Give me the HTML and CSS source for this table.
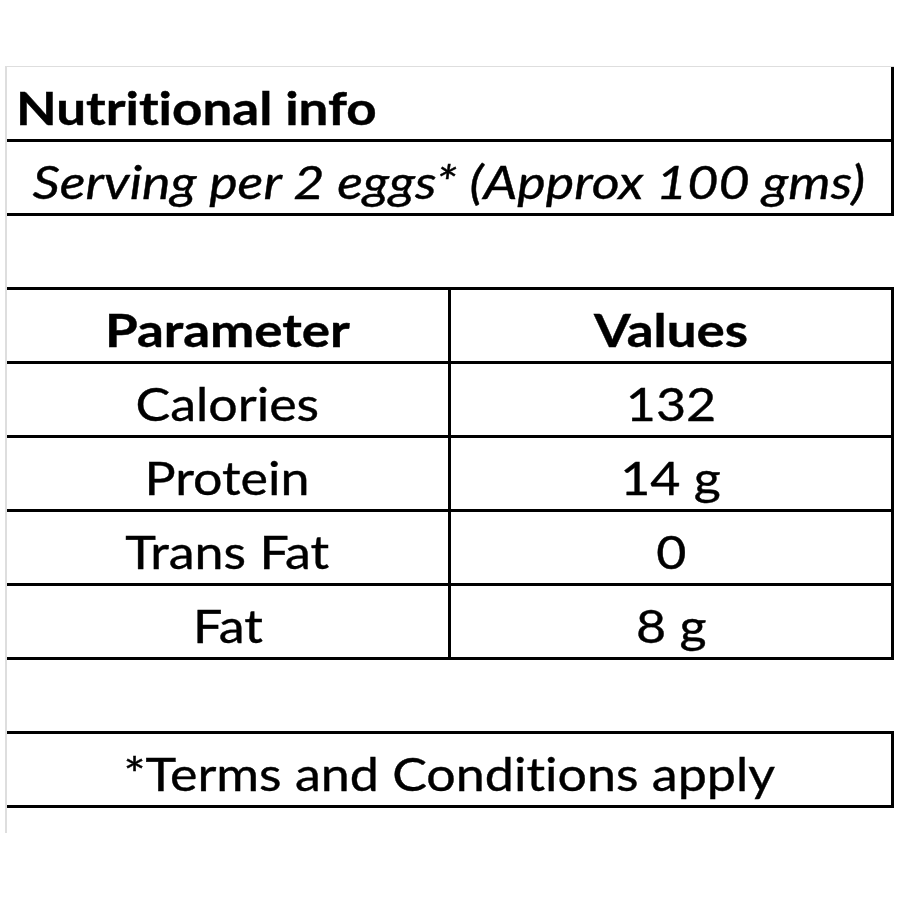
FILE: index.html
```html
<!DOCTYPE html>
<html>
<head>
<meta charset="utf-8">
<link rel="stylesheet" href="styles.css">
</head>
<body>
<div class="sheet">
  <div class="row boxed first"><div class="cell left bold"><span class="txt">Nutritional info</span></div></div>
  <div class="row boxed"><div class="cell center italic"><span class="txt">Serving per 2 eggs* (Approx 100 gms)</span></div></div>
  <div class="row gap"></div>
  <div class="row boxed two"><div class="cell center bold"><span class="txt">Parameter</span></div><div class="cell center bold"><span class="txt">Values</span></div></div>
  <div class="row boxed two"><div class="cell center"><span class="txt">Calories</span></div><div class="cell center"><span class="txt">132</span></div></div>
  <div class="row boxed two"><div class="cell center"><span class="txt">Protein</span></div><div class="cell center"><span class="txt">14 g</span></div></div>
  <div class="row boxed two"><div class="cell center"><span class="txt">Trans Fat</span></div><div class="cell center"><span class="txt">0</span></div></div>
  <div class="row boxed two"><div class="cell center"><span class="txt">Fat</span></div><div class="cell center"><span class="txt">8 g</span></div></div>
  <div class="row gap"></div>
  <div class="row boxed"><div class="cell center"><span class="txt">*Terms and Conditions apply</span></div></div>
  <div class="tail"></div>
</div>
</body>
</html>
```
FILE: styles.css
```css
html, body {
  margin: 0;
  padding: 0;
  background: #ffffff;
}
body {
  font-family: Lato, "Liberation Sans", sans-serif;
  color: #000000;
  font-variant-ligatures: none;
}
.sheet {
  margin-top: 66px;
  margin-left: 5px;
  width: 887px;
  border-top: 1px solid #dedede;
  border-left: 2px solid #dedede;
}
.row {
  box-sizing: border-box;
  height: 74px;
  border-bottom: 3px solid #000000;
  display: grid;
  grid-template-columns: 1fr;
}
.row.first {
  height: 75px;
}
.row.boxed {
  border-right: 3px solid #000000;
}
.row.two {
  grid-template-columns: 444px 1fr;
}
.row.two .cell:first-child {
  border-right: 3px solid #000000;
}
.cell {
  display: flex;
  align-items: flex-end;
  font-size: 46px;
  line-height: 46px;
  padding-bottom: 8px;
  white-space: nowrap;
  -webkit-text-stroke: 0.4px #000000;
}
.cell.left {
  justify-content: flex-start;
  padding-left: 9px;
}
.cell.center {
  justify-content: center;
}
.txt {
  display: inline-block;
  transform: scaleX(1.13);
  transform-origin: center bottom;
}
.cell.left .txt {
  transform-origin: left bottom;
}
.italic .txt {
  transform: scaleX(1.17);
}
.bold {
  font-weight: 700;
}
.bold .txt {
  transform: scaleX(1.15);
}
.italic {
  font-style: italic;
}
.tail {
  height: 25px;
}
```
